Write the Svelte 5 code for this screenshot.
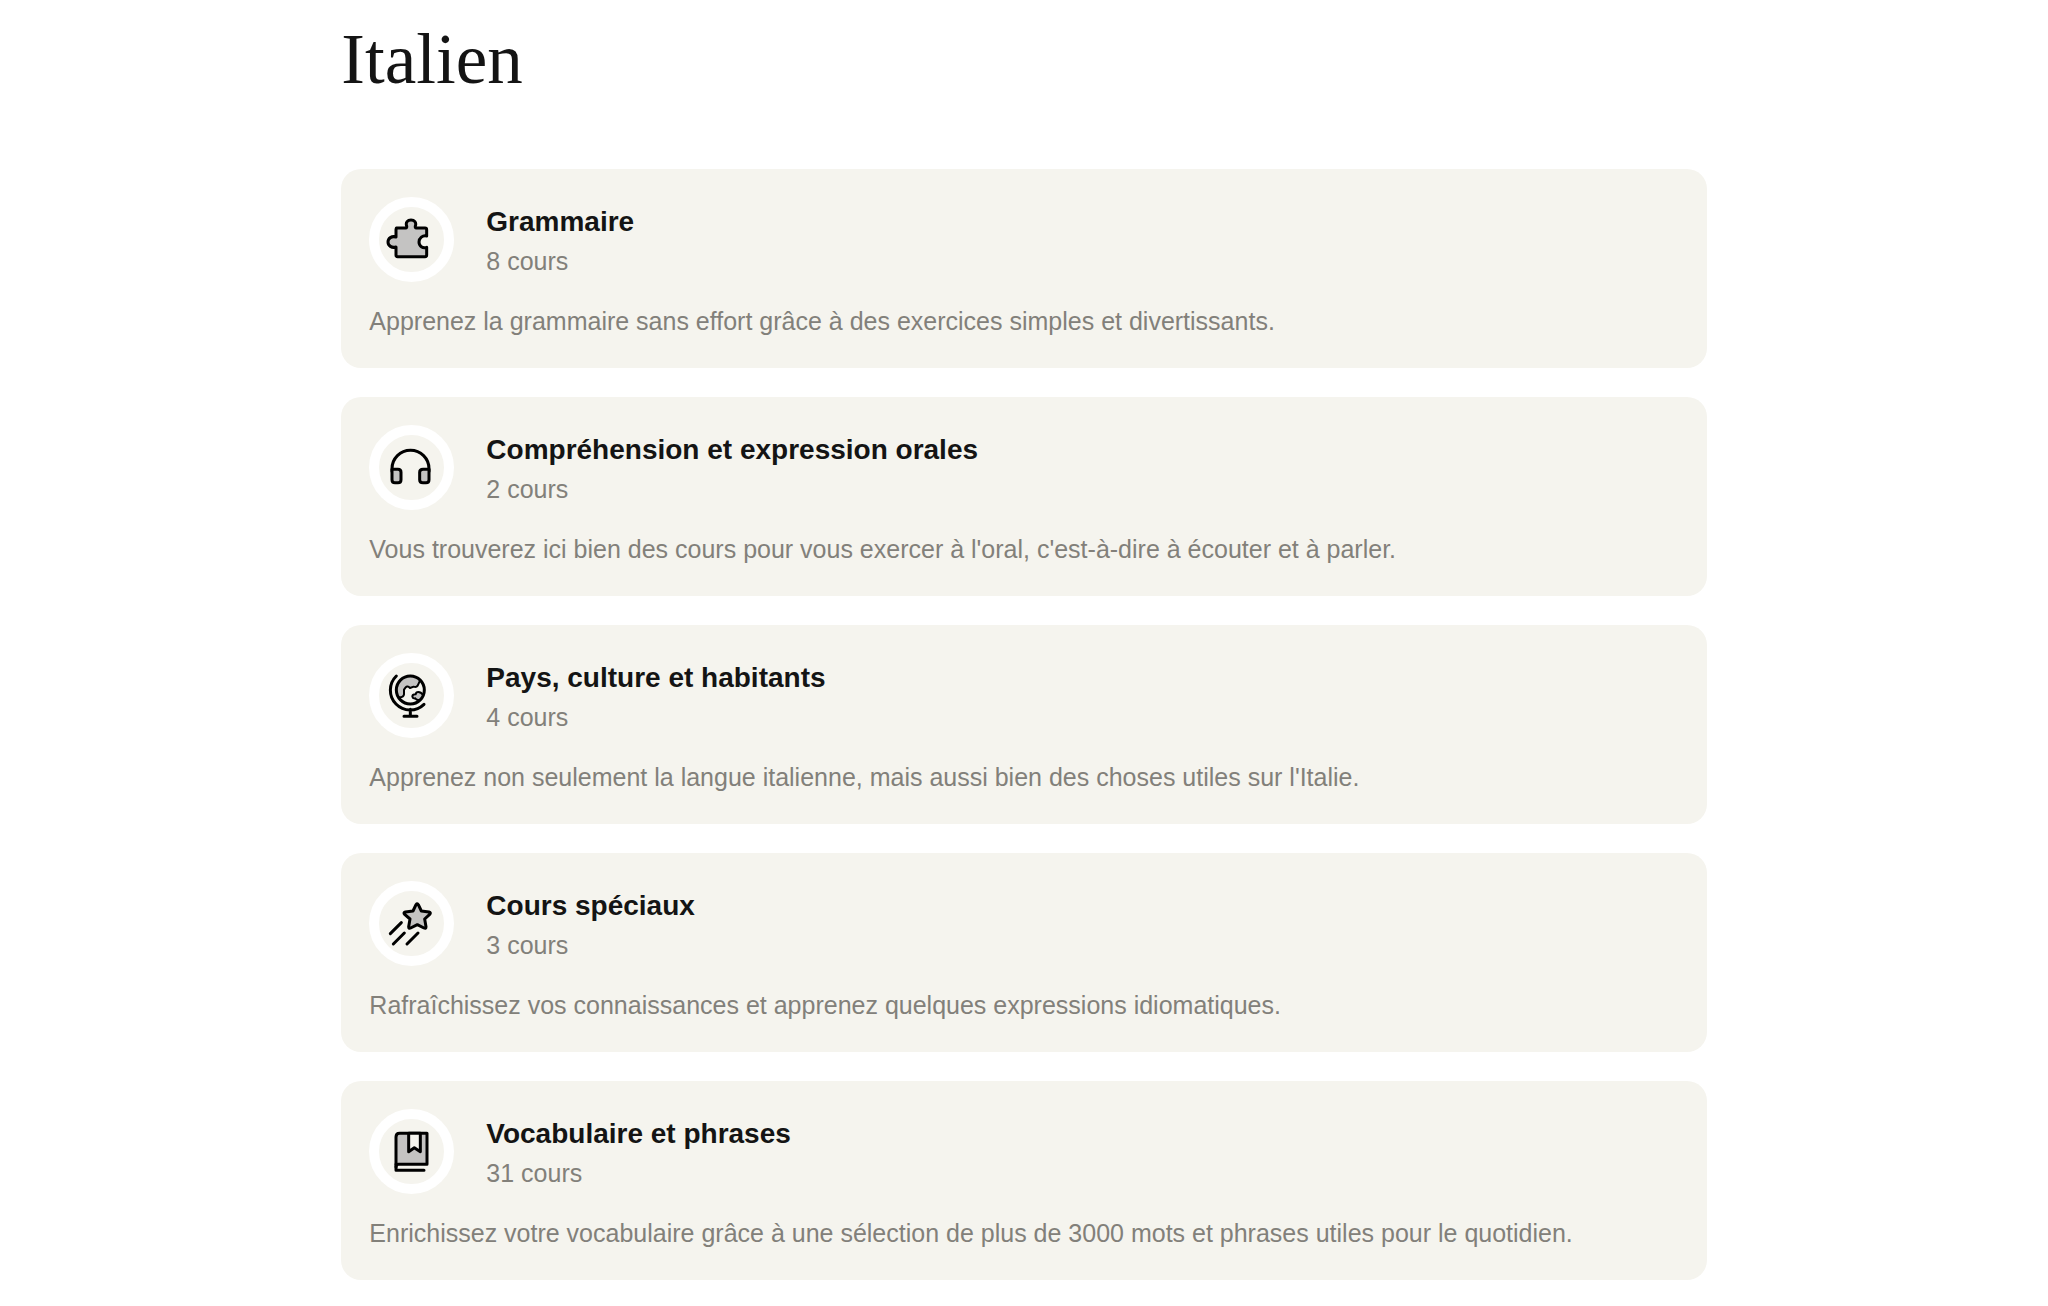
<script>
  const topics = [
    {
      icon: 'puzzle',
      title: 'Grammaire',
      count: 8,
      description: 'Apprenez la grammaire sans effort grâce à des exercices simples et divertissants.',
    },
    {
      icon: 'headphones',
      title: 'Compréhension et expression orales',
      count: 2,
      description: "Vous trouverez ici bien des cours pour vous exercer à l'oral, c'est-à-dire à écouter et à parler.",
    },
    {
      icon: 'globe',
      title: 'Pays, culture et habitants',
      count: 4,
      description: "Apprenez non seulement la langue italienne, mais aussi bien des choses utiles sur l'Italie.",
    },
    {
      icon: 'star',
      title: 'Cours spéciaux',
      count: 3,
      description: 'Rafraîchissez vos connaissances et apprenez quelques expressions idiomatiques.',
    },
    {
      icon: 'book',
      title: 'Vocabulaire et phrases',
      count: 31,
      description: 'Enrichissez votre vocabulaire grâce à une sélection de plus de 3000 mots et phrases utiles pour le quotidien.',
    },
  ];
</script>

<main class="page">
  <div class="content">
    <h1 class="page-title">Italien</h1>

    <ul class="topics">
      {#each topics as topic (topic.icon)}
        <li>
          <a class="card" href="#{topic.icon}">
            <div class="card-head">
              <span class="card-icon">
                <svg viewBox="58 51 195 195" aria-hidden="true">
                  {#if topic.icon === 'puzzle'}
                    <path class="fill" d="M110 114H138Q142 114 141 108C137 97 144 90 154 90S171 97 167 108Q166 114 170 114H196Q201 114 201 119V138C189 135 178 144 178 156S189 176 201 172V195Q201 200 196 200H114Q109 200 109 195V171C96 175 85 167 85 156S96 137 109 141V119Q109 114 114 114Z" />
                  {:else if topic.icon === 'headphones'}
                    <path d="M97 160V152A55 55 0 0 1 208 152V160" />
                    <path class="fill" d="M97 154H115Q124 154 124 163V185Q124 194 115 194H106Q97 194 97 185Z" />
                    <path class="fill" d="M208 154H190Q180 154 180 163V185Q180 194 190 194H199Q208 194 208 185Z" />
                  {:else if topic.icon === 'globe'}
                    <path class="land" d="M112 148C104 118 119 93 151 91C164 91 175 97 181 105L171 121L152 126L143 121L134 130L131 150L122 154Z" />
                    <path class="land" d="M188 147L182 140L172 139L168 145L158 149L161 158L176 163Z" />
                    <path class="thin" d="M181 104L174 119Q170 125 162 122L151 126Q143 118 138 124L133 131V145Q132 153 120 154" />
                    <path class="thin" d="M190 147Q184 138 176 138Q169 138 168 145Q158 145 158 152Q159 158 167 157Q170 163 179 162" />
                    <circle cx="152" cy="132" r="42" />
                    <path d="M110 90A58 58 0 0 0 193 175M152 190V210M133 211H172" />
                  {:else if topic.icon === 'star'}
                    <path class="fill" d="M169 92Q173 87 176 92L185 111L208 114Q215 116 210 121L195 135L199 158Q199 165 193 162L173 152L153 162Q147 165 147 158L151 135L135 121Q130 116 137 114L160 111Z" />
                    <path d="M125 146L92 179M134 177L101 210M175 177L142 210" />
                  {:else}
                    <path class="fill" d="M109 187V105Q109 94 120 94H202V187H117Q109 187 109 195" />
                    <path d="M109 187V205H193" />
                    <path class="ribbon" d="M147 94V149L164 137L182 149V94Z" />
                  {/if}
                </svg>
              </span>
              <div>
                <h2 class="card-title">{topic.title}</h2>
                <p class="card-count">{topic.count} cours</p>
              </div>
            </div>
            <p class="card-description">{topic.description}</p>
          </a>
        </li>
      {/each}
    </ul>
  </div>
</main>

<style>
  :global(body) {
    margin: 0;
    background: #fff;
  }

  .page {
    display: grid;
    grid-template-columns: 1fr 4fr 1fr;
    padding: 15px 0 28px;
    font-family: "Liberation Sans", Arial, sans-serif;
    color: #141414;
  }

  .content {
    grid-column: 2;
  }

  .page-title {
    margin: 0 0 66px;
    font-family: "Liberation Serif", "Times New Roman", serif;
    font-size: 71px;
    font-weight: 400;
    line-height: 88px;
  }

  .topics {
    display: flex;
    flex-direction: column;
    gap: 29px;
    margin: 0;
    padding: 0;
    list-style: none;
  }

  .card {
    display: block;
    padding: 28px 28px 29px;
    border-radius: 20px;
    background: #f5f4ee;
    color: inherit;
    text-decoration: none;
  }

  .card:focus-visible {
    outline: 2px solid #141414;
    outline-offset: 2px;
  }

  .card-head {
    display: flex;
    align-items: center;
    gap: 32px;
    margin-bottom: 21px;
  }

  .card-icon {
    flex: none;
    box-sizing: border-box;
    width: 85px;
    height: 85px;
    border: 10px solid #fff;
    border-radius: 50%;
  }

  .card-icon svg {
    display: block;
    width: 100%;
    height: 100%;
    fill: none;
    stroke: #000;
    stroke-width: 9;
    stroke-linecap: round;
    stroke-linejoin: round;
  }

  .card-icon .fill {
    fill: #c4c3c2;
  }

  .card-icon .land {
    fill: #c4c3c2;
    stroke: none;
  }

  .card-icon .thin {
    stroke-width: 6;
  }

  .card-icon .ribbon {
    fill: #f5f4ee;
  }

  .card-title {
    margin: 0;
    font-size: 28px;
    font-weight: 700;
    line-height: 42px;
  }

  .card-count,
  .card-description {
    margin: 0;
    font-size: 25px;
    line-height: 36px;
    color: #82807a;
  }
</style>
